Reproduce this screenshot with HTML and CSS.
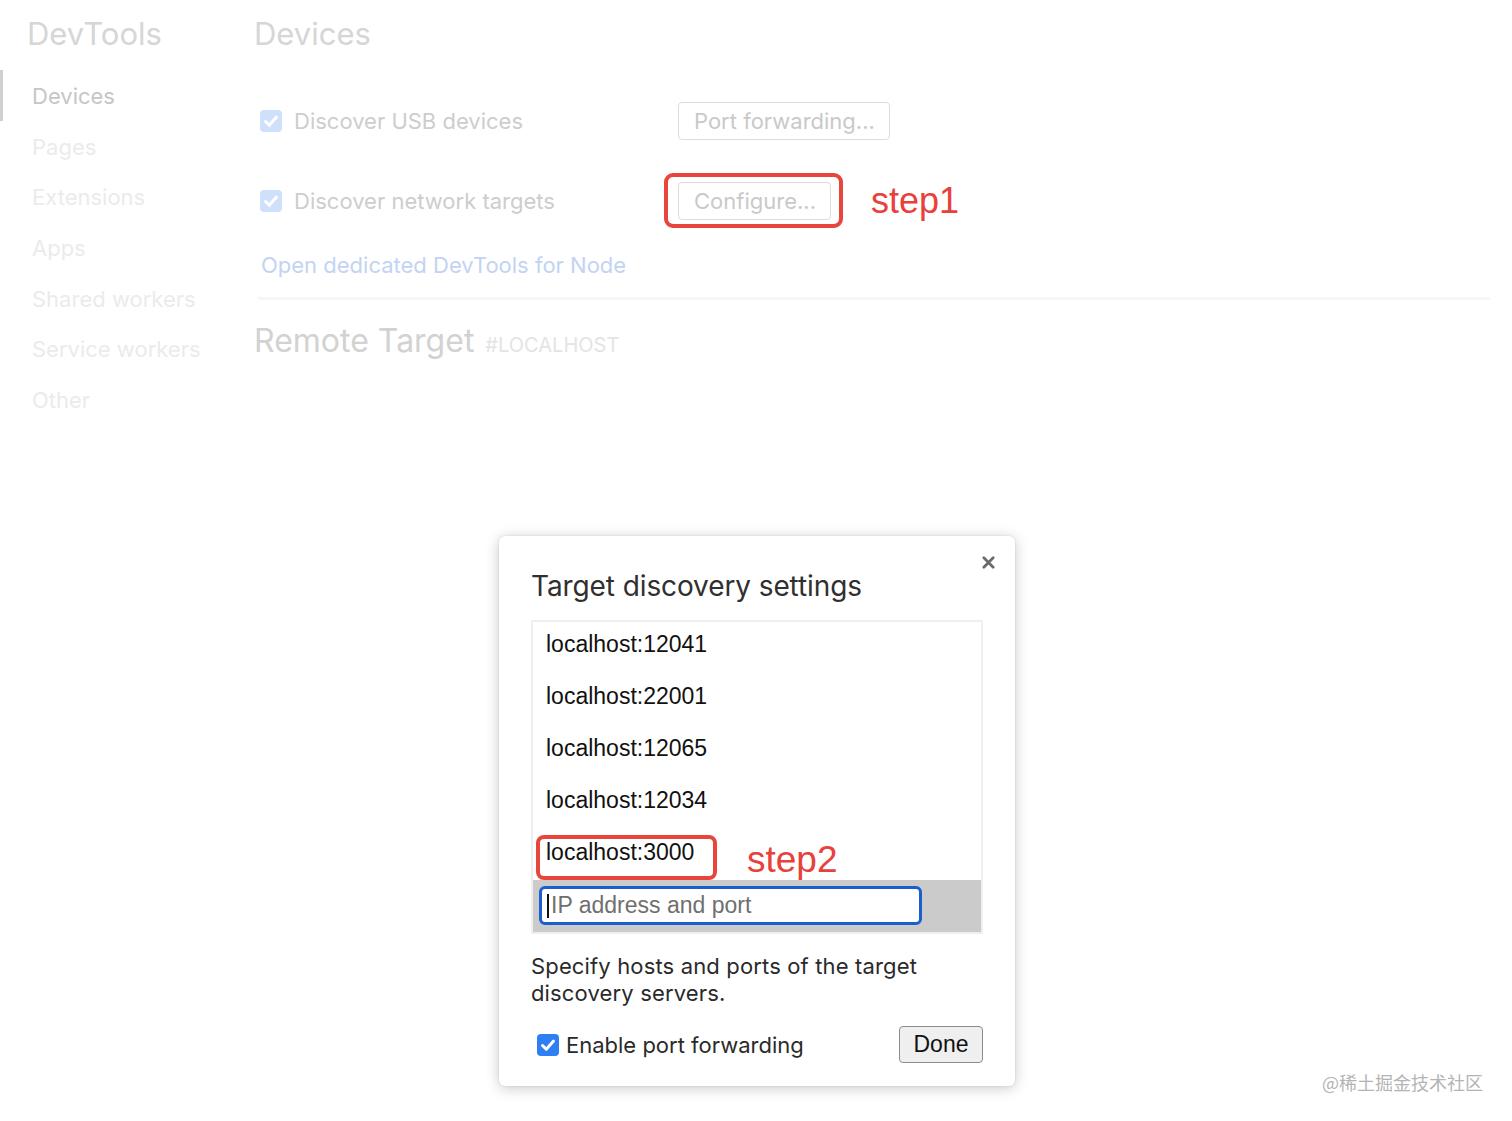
FILE: index.html
```html
<!DOCTYPE html>
<html lang="en">
<head>
<meta charset="utf-8">
<title>DevTools - Devices</title>
<link rel="stylesheet" href="styles.css">
</head>
<body>
<div class="page">
  <aside class="sidebar">
    <h1 class="brand">DevTools</h1>
    <nav class="nav">
      <div class="nav-item active">Devices</div>
      <div class="nav-item">Pages</div>
      <div class="nav-item">Extensions</div>
      <div class="nav-item">Apps</div>
      <div class="nav-item">Shared workers</div>
      <div class="nav-item">Service workers</div>
      <div class="nav-item">Other</div>
    </nav>
  </aside>
  <main class="main">
    <h2 class="title">Devices</h2>
    <div class="settings">
      <label class="opt"><span class="cb faded"><svg viewBox="0 0 22 22"><path d="M5.5 11.5l3.8 3.8 7.2-8.2" fill="none" stroke="#fff" stroke-width="3" stroke-linecap="round" stroke-linejoin="round"/></svg></span>Discover USB devices</label>
      <div><button class="btn">Port forwarding...</button></div>
      <label class="opt"><span class="cb faded"><svg viewBox="0 0 22 22"><path d="M5.5 11.5l3.8 3.8 7.2-8.2" fill="none" stroke="#fff" stroke-width="3" stroke-linecap="round" stroke-linejoin="round"/></svg></span>Discover network targets</label>
      <div class="cfg-cell">
        <span class="btn-wrap"><button class="btn">Configure...</button><span class="frame frame-cfg"></span></span>
        <span class="step">step1</span>
      </div>
    </div>
    <a class="node-link">Open dedicated DevTools for Node</a>
    <div class="sep"></div>
    <h2 class="remote">Remote Target <span class="host">#LOCALHOST</span></h2>
  </main>
</div>

<div class="dialog">
  <span class="close"><svg viewBox="0 0 16 16"><path d="M3 3l10 10M13 3L3 13" stroke="#6b6b6b" stroke-width="3" stroke-linecap="round"/></svg></span>
  <h3 class="dlg-title">Target discovery settings</h3>
  <div class="list">
    <div class="item">localhost:12041</div>
    <div class="item">localhost:22001</div>
    <div class="item">localhost:12065</div>
    <div class="item">localhost:12034</div>
    <div class="item last">localhost:3000<span class="frame frame-item"></span><span class="step step2">step2</span></div>
    <div class="editor"><div class="input"><span class="caret"></span>IP address and port</div></div>
  </div>
  <p class="desc">Specify hosts and ports of the target discovery servers.</p>
  <div class="footer">
    <label class="opt2"><span class="cb on"><svg viewBox="0 0 22 22"><path d="M5.5 11.5l3.8 3.8 7.2-8.2" fill="none" stroke="#fff" stroke-width="3" stroke-linecap="round" stroke-linejoin="round"/></svg></span>Enable port forwarding</label>
    <button class="done">Done</button>
  </div>
</div>

<div class="watermark">@稀土掘金技术社区</div>
</body>
</html>
```

FILE: styles.css
```css
html, body {
  margin: 0;
  padding: 0;
  background: #fff;
}
body {
  width: 1512px;
  height: 1121px;
  overflow: hidden;
  position: relative;
  font-family: Inter, "Noto Sans", sans-serif;
}
.page {
  display: flex;
  height: 1121px;
}
.sidebar {
  width: 254px;
  flex: none;
}
.brand {
  margin: 0;
  padding: 14px 0 0 27px;
  height: 56px;
  box-sizing: border-box;
  font-size: 31px;
  font-weight: 400;
  line-height: 40px;
  color: #d6d6d6;
}
.nav {
  margin-top: 14px;
}
.nav-item {
  height: 50.7px;
  line-height: 52px;
  padding-left: 32px;
  font-size: 22px;
  color: #ebebeb;
  box-sizing: border-box;
}
.nav-item.active {
  color: #c6c6c6;
  border-left: 3px solid #d0d0d0;
  padding-left: 29px;
}
.main {
  flex: 1;
}
.title {
  margin: 0;
  padding-top: 14px;
  height: 56px;
  box-sizing: border-box;
  font-size: 31px;
  font-weight: 400;
  line-height: 40px;
  color: #d6d6d6;
}
.settings {
  display: grid;
  grid-template-columns: 418px auto;
  grid-auto-rows: 80px;
  align-items: center;
  margin-top: 25px;
  padding-left: 6px;
}
.opt {
  display: flex;
  align-items: center;
  gap: 12px;
  font-size: 22px;
  color: #cdcdcd;
}
.cb {
  width: 22px;
  height: 22px;
  border-radius: 4px;
  display: inline-flex;
  flex: none;
}
.cb svg { width: 22px; height: 22px; }
.cb.faded { background: #cfe0fb; }
.cb.on { background: #2e7ef4; }
.btn {
  font-family: Inter, "Noto Sans", sans-serif;
  font-size: 22px;
  color: #c9c9c9;
  background: #fff;
  border: 1.5px solid #dcdcdc;
  border-radius: 4px;
  height: 38px;
  padding: 0 14px 0 15px;
  line-height: 34px;
}
.cfg-cell {
  display: flex;
  align-items: center;
  gap: 40px;
}
.btn-wrap {
  position: relative;
  display: inline-flex;
}
.frame {
  position: absolute;
  border: 4px solid #e8453c;
  border-radius: 9px;
  pointer-events: none;
}
.frame-cfg {
  left: -14px;
  top: -9px;
  right: -12px;
  bottom: -8px;
}
.step {
  font-family: "Liberation Sans", Arial, sans-serif;
  font-size: 36px;
  color: #e8403a;
  line-height: 40px;
}
.node-link {
  display: block;
  margin: 9px 0 0 7px;
  font-size: 22px;
  line-height: 30px;
  color: #c3d3f4;
}
.sep {
  height: 3px;
  background: #f6f6f6;
  margin: 17px 22px 0 4px;
}
.remote {
  margin: 20px 0 0;
  font-size: 32px;
  font-weight: 400;
  line-height: 42px;
  color: #d2d2d2;
}
.host {
  font-size: 20px;
  color: #e4e4e4;
  margin-left: 2px;
}

/* dialog */
.dialog {
  position: absolute;
  left: 499px;
  top: 536px;
  width: 516px;
  height: 550px;
  box-sizing: border-box;
  background: #fff;
  border-radius: 6px;
  box-shadow: 0 2px 14px rgba(0, 0, 0, 0.22), 0 0 2px rgba(0, 0, 0, 0.12);
  padding: 28px 32px 0 32px;
}
.close {
  position: absolute;
  right: 19px;
  top: 19px;
  width: 15px;
  height: 15px;
}
.close svg { width: 15px; height: 15px; display: block; }
.dlg-title {
  margin: 0;
  font-size: 28px;
  font-weight: 400;
  line-height: 44px;
  color: #303030;
  letter-spacing: -0.1px;
}
.list {
  margin-top: 12px;
  border: 2px solid #efefef;
  font-family: "Liberation Sans", Arial, sans-serif;
  font-size: 23px;
  color: #111;
}
.item {
  position: relative;
  height: 44px;
  line-height: 44px;
  margin-bottom: 8px;
  padding-left: 13px;
}
.item.last {
  margin-bottom: 6px;
}
.frame-item {
  left: 3px;
  top: 5px;
  width: 181px;
  height: 45px;
  box-sizing: border-box;
  border-radius: 8px;
}
.step2 {
  position: absolute;
  left: 214px;
  top: 10px;
  font-size: 37px;
}
.editor {
  background: #cbcbcb;
  padding: 6px 0 7px 6px;
}
.input {
  width: 383px;
  height: 39px;
  box-sizing: border-box;
  border: 3px solid #1b5fcf;
  border-radius: 6px;
  background: #fff;
  color: #6f6f6f;
  line-height: 33px;
  padding-left: 10px;
  display: flex;
  align-items: center;
}
.caret {
  width: 2px;
  height: 24px;
  background: #111;
  margin-left: -5px;
  margin-right: 2px;
}
.desc {
  margin: 19px 0 0;
  font-size: 22px;
  line-height: 27px;
  color: #2a2a2a;
  width: 420px;
  letter-spacing: 0.15px;
}
.footer {
  display: flex;
  justify-content: space-between;
  align-items: center;
  margin-top: 19px;
}
.opt2 {
  display: flex;
  align-items: center;
  gap: 7px;
  padding-left: 6px;
  font-size: 22px;
  color: #2a2a2a;
}
.done {
  font-family: "Liberation Sans", Arial, sans-serif;
  font-size: 23px;
  color: #111;
  background: #efefef;
  border: 1.5px solid #8c8c8c;
  border-radius: 4px;
  width: 84px;
  height: 37px;
  padding: 0;
}
.watermark {
  position: absolute;
  right: 29px;
  bottom: 28px;
  font-family: "Noto Sans CJK SC", sans-serif;
  font-size: 18px;
  color: #b4b4b4;
  line-height: 22px;
}
```
